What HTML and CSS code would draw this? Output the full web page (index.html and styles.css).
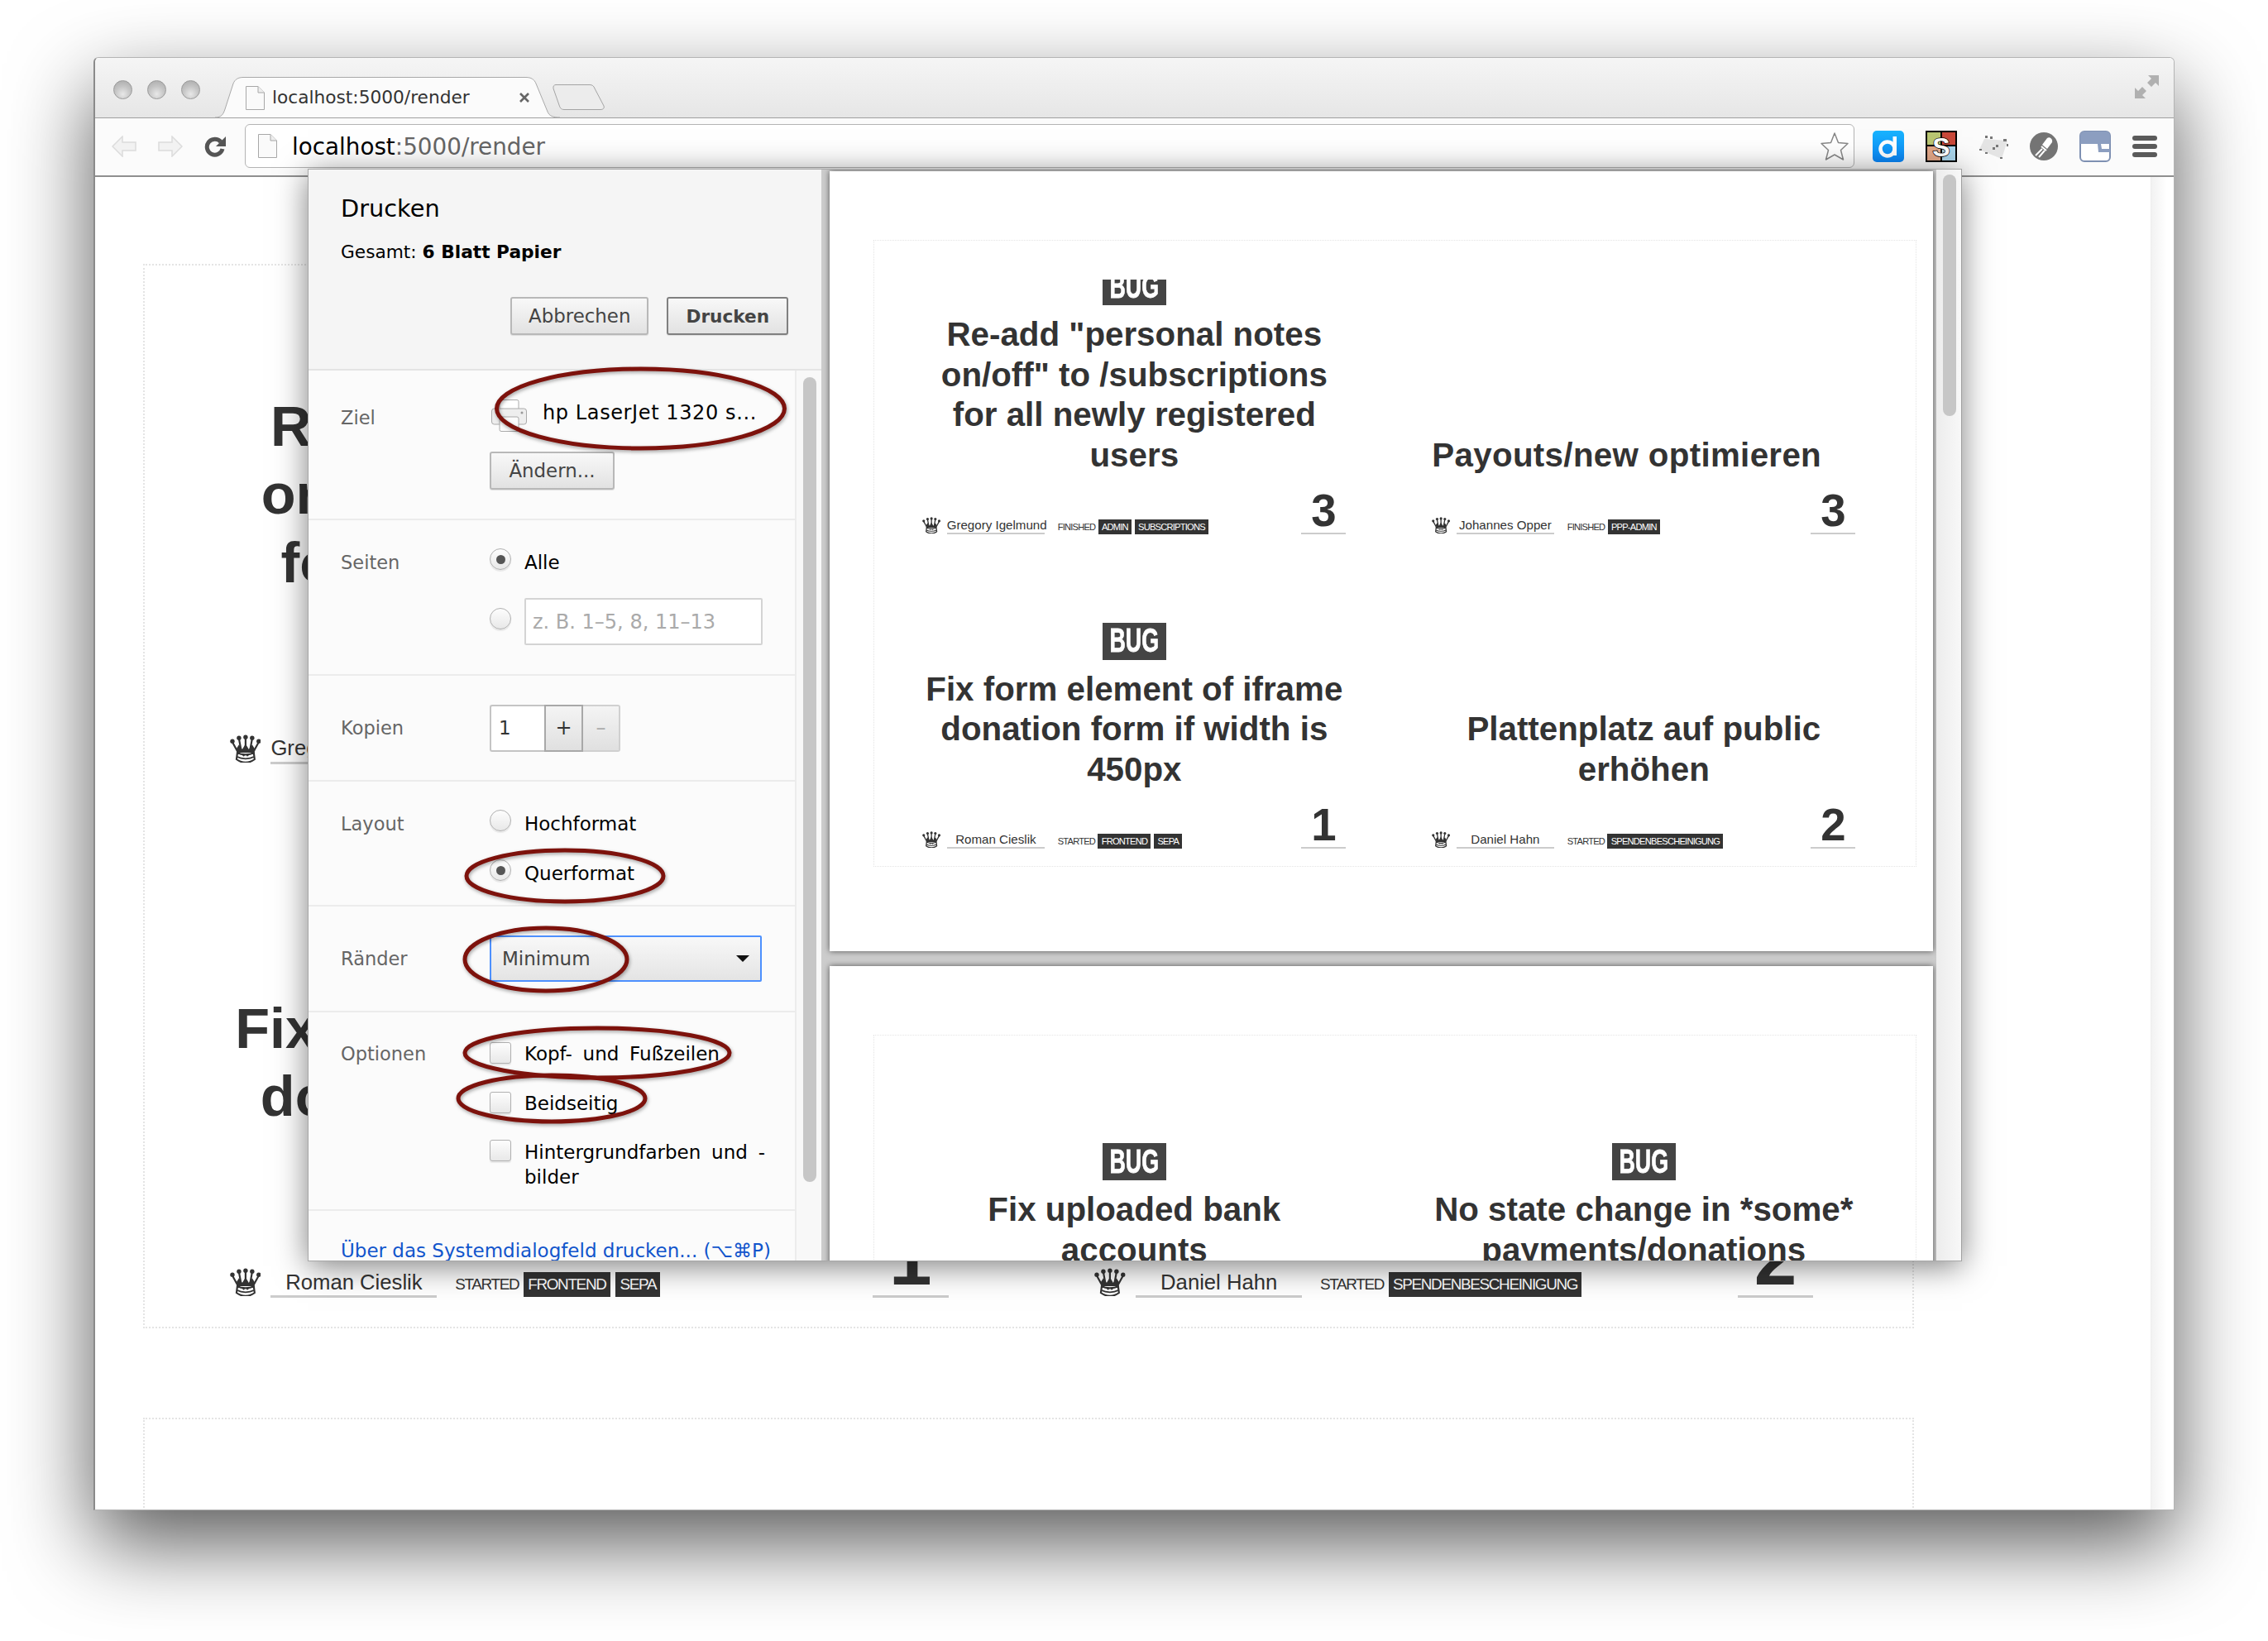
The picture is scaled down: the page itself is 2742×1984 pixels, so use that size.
FILE: index.html
```html
<!DOCTYPE html>
<html lang="de">
<head>
<meta charset="utf-8">
<title>localhost:5000/render</title>
<link rel="stylesheet" href="styles.css">
</head>
<body>
<svg class="defs" aria-hidden="true">
  <symbol id="page-icon" viewBox="0 0 23 29">
    <path d="M.5.5H15L22.5 8V28.500H.5Z" fill="#fafafa" stroke="#a8a8a8"/>
    <path d="M15 .5V8H22.500" fill="#eee" stroke="#a8a8a8"/>
  </symbol>
  <symbol id="crown" viewBox="0 0 38 34">
    <g fill="none" stroke="#333" stroke-width="2.2">
      <path d="M3 9 10 22M11 5 14 21M19 3V21M27 5 24 21M35 9 28 22"/>
      <path d="M9 22C14 25 24 25 29 22L30 30C24 35 14 35 8 30Z" fill="#fff"/>
      <path d="M9 27C14 30 24 30 29 27M15 24l2.500 2m5.500-2-2.500 2" stroke-width="1.800"/>
    </g>
    <path d="M8 17 11 12 15 18 19 11 23 18 27 12 30 17 28 22H10Z" fill="#333"/>
    <g fill="#333">
      <circle cx="3" cy="8" r="2.700"/><circle cx="11" cy="4" r="2.700"/><circle cx="19" cy="3" r="2.700"/>
      <circle cx="27" cy="4" r="2.700"/><circle cx="35" cy="8" r="2.700"/>
    </g>
  </symbol>
</svg>

<div class="window">
  <header class="titlebar">
    <div class="lights"><i class="light"></i><i class="light"></i><i class="light"></i></div>
    <div class="tab">
      <svg class="tab-shape" viewBox="0 0 417 50" width="417" height="50"><path d="M0 49C8 49 10 45 12 39L22 8C24 3 28 .5 34 .5H376C382 .5 386 3 388 8L402 42C404 47 408 49 417 49" fill="#fbfbfb" stroke="#a9a9a9"/></svg>
      <svg class="page-ico"><use href="#page-icon"/></svg>
      <span class="tab-title">localhost:5000/render</span>
      <svg class="tab-close" viewBox="0 0 14 14" width="14" height="14"><path d="M2 2 12 12M12 2 2 12" stroke="#666" stroke-width="2.600"/></svg>
    </div>
    <svg class="newtab" viewBox="0 0 63 31" width="63" height="31"><path d="M4 .5H45C48 .5 50 2 51 5L62 26C63 29 61 30.500 58 30.500H14C10 30.500 9 28 8 25L1 5C.5 2 2 .5 4 .5Z" fill="#ececec" stroke="#a4a4a4"/></svg>
    <svg class="fullscreen" viewBox="0 0 29 28" width="29" height="28"><path d="M16 0H29V13L25 9 20 14 15 9 20 4ZM0 15 4 19 9 14 14 19 9 24 13 28H0Z" fill="#b0b0b0"/></svg>
  </header>

  <nav class="toolbar">
    <svg class="nav-ico" viewBox="0 0 30 26" width="30" height="26"><path d="M13 1 1 13 13 25V18H29V8H13Z" fill="#f2f2f2" stroke="#dcdcdc" stroke-width="1.500"/></svg>
    <svg class="nav-ico" viewBox="0 0 30 26" width="30" height="26"><path d="M17 1 29 13 17 25V18H1V8H17Z" fill="#f2f2f2" stroke="#dcdcdc" stroke-width="1.500"/></svg>
    <svg class="nav-ico reload" viewBox="0 0 27 26" width="27" height="26"><path d="M20 7.500A9.500 9.500 0 1 0 22 16" fill="none" stroke="#555" stroke-width="5"/><path d="M26 1V13H14Z" fill="#555"/></svg>
    <div class="omnibox">
      <svg class="page-ico"><use href="#page-icon"/></svg>
      <span class="url"><b class="host">localhost</b>:5000/render</span>
      <svg class="star" viewBox="0 0 36 36" width="36" height="36"><path d="M18 2 22.500 13.500 34 14.500 25.500 22.500 28.500 34 18 28 7.500 34 10.500 22.500 2 14.500 13.500 13.500Z" fill="#fff" stroke="#888" stroke-width="1.500" stroke-linejoin="round"/></svg>
    </div>
    <div class="exts">
      <svg viewBox="0 0 38 38" width="38" height="38">
        <defs><linearGradient id="dblue" x1="0" y1="0" x2="0" y2="1"><stop offset="0" stop-color="#18b4ff"/><stop offset="1" stop-color="#0a84f5"/></linearGradient></defs>
        <rect width="38" height="38" rx="5" fill="url(#dblue)"/>
        <circle cx="18" cy="22" r="8.500" fill="none" stroke="#fff" stroke-width="4.500"/><rect x="24.500" y="7" width="4.500" height="23" fill="#fff"/>
      </svg>
      <svg viewBox="0 0 38 38" width="38" height="38">
        <rect width="38" height="38" fill="#000"/>
        <rect x="2" y="2" width="16" height="15" fill="#b9c672"/><rect x="20" y="2" width="16" height="15" fill="#c8493a"/>
        <rect x="2" y="19" width="16" height="17" fill="#e3a889"/><rect x="20" y="19" width="16" height="17" fill="#a9d4ea"/>
        <text class="ext-s" x="19" y="31" text-anchor="middle">S</text>
      </svg>
      <svg viewBox="0 0 37 30" width="37" height="30">
        <path d="M7 6 35 8 28 30 1 19Z" fill="#e4e4e4"/>
        <path d="M8 2h3v3H8zM14 3h3v3h-3zM30 6h4v3h-4zM21 13h3v3h-3zM17 16h3v3h-3zM1 18h3v2H1zM8 22h3v2H8zM26 28h3v2h-3zM34 12h2v3h-2z" fill="#777"/>
      </svg>
      <svg viewBox="0 0 34 34" width="34" height="34">
        <ellipse cx="17" cy="17" rx="17" ry="17" fill="#747474"/>
        <path d="M21 7C24 5 28 8 27 12L21 20 15 15Z" fill="#fff"/><path d="M14 17 20 22M15 20 7 28M18 22 11 30" stroke="#fff" stroke-width="2"/>
      </svg>
      <svg viewBox="0 0 38 38" width="38" height="38">
        <rect x="1" y="1" width="36" height="36" rx="5" fill="#fff" stroke="#7e90b2" stroke-width="2"/>
        <path d="M1 6a5 5 0 0 1 5-5H32a5 5 0 0 1 5 5V16H22L23 26H37V22H27L26 16H1Z" fill="#8c9ec0"/>
      </svg>
      <div class="menu-ico"><i></i><i></i><i></i></div>
    </div>
  </nav>

  <main class="content">
    <div class="doc">
      <section class="box box-screen">
        <article class="card">
          <span class="bug"><span>BUG</span></span>
          <h2 class="title">Re-add "personal notes<br>on/off" to /subscriptions<br>for all newly registered<br>users</h2>
          <div class="foot"><svg class="crown"><use href="#crown"/></svg><span class="name"><span>Gregory Igelmund</span></span><span class="status">FINISHED</span><span class="tag">ADMIN</span><span class="tag">SUBSCRIPTIONS</span><span class="points"><span>3</span></span></div>
        </article>
        <article class="card">
          <h2 class="title title-left">Payouts/new optimieren</h2>
          <div class="foot"><svg class="crown"><use href="#crown"/></svg><span class="name"><span>Johannes Opper</span></span><span class="status">FINISHED</span><span class="tag">PPP-ADMIN</span><span class="points"><span>3</span></span></div>
        </article>
        <article class="card">
          <span class="bug"><span>BUG</span></span>
          <h2 class="title">Fix form element of iframe<br>donation form if width is<br>450px</h2>
          <div class="foot"><svg class="crown"><use href="#crown"/></svg><span class="name"><span>Roman Cieslik</span></span><span class="status">STARTED</span><span class="tag">FRONTEND</span><span class="tag">SEPA</span><span class="points"><span>1</span></span></div>
        </article>
        <article class="card">
          <h2 class="title">Plattenplatz auf public<br>erhöhen</h2>
          <div class="foot"><svg class="crown"><use href="#crown"/></svg><span class="name"><span>Daniel Hahn</span></span><span class="status">STARTED</span><span class="tag">SPENDENBESCHEINIGUNG</span><span class="points"><span>2</span></span></div>
        </article>
      </section>
      <section class="box box-screen box-next"></section>
    </div>
    <div class="doc-scroll"></div>
  </main>

  <div class="dialog">
    <aside class="side">
      <div class="side-head">
        <h1 class="side-title">Drucken</h1>
        <p class="total">Gesamt: <b>6 Blatt Papier</b></p>
        <div class="actions"><button class="btn">Abbrechen</button><button class="btn btn-main">Drucken</button></div>
      </div>
      <div class="side-body">
        <div class="rows">
          <div class="row row-ziel">
            <div class="label">Ziel</div>
            <div class="ctrl">
              <div class="dest">
                <svg viewBox="0 0 43 39" width="43" height="39"><rect x="10" y=".5" width="23" height="16" rx="2" fill="#fff" stroke="#aaa"/><rect x=".5" y="11" width="42" height="19" rx="3" fill="#eee" stroke="#aaa"/><rect x="10" y="21" width="23" height="17.500" rx="2" fill="#fbfbfb" stroke="#aaa"/><circle cx="37" cy="16" r="1.500" fill="#999"/></svg>
                <span>hp LaserJet 1320 s...</span>
              </div>
              <button class="btn btn-change">Ändern...</button>
            </div>
          </div>
          <div class="row row-seiten">
            <div class="label">Seiten</div>
            <div class="ctrl">
              <label class="opt"><i class="radio on"></i>Alle</label>
              <div class="opt opt-input"><i class="radio"></i><span class="pages-input">z. B. 1–5, 8, 11–13</span></div>
            </div>
          </div>
          <div class="row row-center row-kopien">
            <div class="label">Kopien</div>
            <div class="spin"><span class="spin-val">1</span><span class="spin-btn">+</span><span class="spin-btn off">–</span></div>
          </div>
          <div class="row row-layout">
            <div class="label">Layout</div>
            <div class="ctrl">
              <label class="opt"><i class="radio"></i>Hochformat</label>
              <label class="opt"><i class="radio on"></i>Querformat</label>
            </div>
          </div>
          <div class="row row-center row-rand">
            <div class="label">Ränder</div>
            <div class="select"><span>Minimum</span><i class="caret"></i></div>
          </div>
          <div class="row row-opts">
            <div class="label">Optionen</div>
            <div class="ctrl">
              <label class="opt"><i class="check"></i>Kopf- und Fußzeilen</label>
              <label class="opt"><i class="check"></i>Beidseitig</label>
              <label class="opt opt-wrap"><i class="check"></i><span>Hintergrundfarben und -<br>bilder</span></label>
            </div>
          </div>
          <a class="sys-link">Über das Systemdialogfeld drucken... (⌥⌘P)</a>
        </div>
        <div class="side-scroll"><i></i></div>
      </div>
    </aside>

    <div class="preview">
      <div class="sheet">
        <section class="box box-print">
          <article class="card">
            <span class="bug"><span>BUG</span></span>
            <h2 class="title">Re-add "personal notes<br>on/off" to /subscriptions<br>for all newly registered<br>users</h2>
            <div class="foot"><svg class="crown"><use href="#crown"/></svg><span class="name"><span>Gregory Igelmund</span></span><span class="status">FINISHED</span><span class="tag">ADMIN</span><span class="tag">SUBSCRIPTIONS</span><span class="points"><span>3</span></span></div>
          </article>
          <article class="card">
            <h2 class="title title-left">Payouts/new optimieren</h2>
            <div class="foot"><svg class="crown"><use href="#crown"/></svg><span class="name"><span>Johannes Opper</span></span><span class="status">FINISHED</span><span class="tag">PPP-ADMIN</span><span class="points"><span>3</span></span></div>
          </article>
          <article class="card">
            <span class="bug"><span>BUG</span></span>
            <h2 class="title">Fix form element of iframe<br>donation form if width is<br>450px</h2>
            <div class="foot"><svg class="crown"><use href="#crown"/></svg><span class="name"><span>Roman Cieslik</span></span><span class="status">STARTED</span><span class="tag">FRONTEND</span><span class="tag">SEPA</span><span class="points"><span>1</span></span></div>
          </article>
          <article class="card">
            <h2 class="title">Plattenplatz auf public<br>erhöhen</h2>
            <div class="foot"><svg class="crown"><use href="#crown"/></svg><span class="name"><span>Daniel Hahn</span></span><span class="status">STARTED</span><span class="tag">SPENDENBESCHEINIGUNG</span><span class="points"><span>2</span></span></div>
          </article>
        </section>
      </div>
      <div class="sheet">
        <section class="box box-print">
          <article class="card">
            <span class="bug"><span>BUG</span></span>
            <h2 class="title">Fix uploaded bank<br>accounts</h2>
            <div class="foot"></div>
          </article>
          <article class="card">
            <span class="bug"><span>BUG</span></span>
            <h2 class="title">No state change in *some*<br>payments/donations</h2>
            <div class="foot"></div>
          </article>
        </section>
      </div>
      <div class="preview-scroll"><i></i></div>
    </div>

    <svg class="marks" viewBox="372 204 1000 1320" width="1000" height="1320" aria-hidden="true">
      <ellipse cx="773.500" cy="493" rx="174" ry="48"/>
      <ellipse cx="682" cy="1058" rx="119" ry="31"/>
      <ellipse cx="659" cy="1159" rx="98" ry="38"/>
      <ellipse cx="721" cy="1272" rx="160" ry="30"/>
      <ellipse cx="666" cy="1327" rx="113" ry="28"/>
    </svg>
  </div>
</div>
</body>
</html>
```
FILE: styles.css
```css
* { box-sizing: border-box; }
html, body { margin: 0; padding: 0; background: #fff; }
body { width: 2742px; height: 1984px; overflow: hidden; font-family: "DejaVu Sans", sans-serif; padding: 69px 0 0 113px; }
.defs { position: absolute; width: 0; height: 0; }
h1, h2, p { margin: 0; font-weight: normal; }
i { display: block; font-style: normal; }
svg { display: block; flex: none; }

/* browser window */
.window { position: relative; width: 2516px; height: 1757px; display: flex; flex-direction: column; border: 1px solid #b4b4b4; border-left: 2px solid #8a8a8a; border-radius: 6px 6px 0 0; box-shadow: 0 40px 100px rgba(0,0,0,.65); background: #fff; }
.titlebar { height: 73px; flex: none; display: flex; align-items: flex-end; padding-left: 22px; background: linear-gradient(#f5f5f5, #e6e6e6); border-bottom: 1px solid #a0a0a0; border-radius: 6px 6px 0 0; }
.lights { display: flex; gap: 18px; align-self: flex-start; margin-top: 27px; }
.light { width: 23px; height: 23px; border-radius: 50%; border: 1px solid #9a9a9a; background: radial-gradient(circle at 50% 75%, #e8e8e8 0, #c4c4c4 50%, #a8a8a8 100%); }
.tab { position: relative; width: 417px; height: 50px; margin: 0 0 -1px 18px; display: flex; align-items: center; padding-left: 37px; font-size: 21.700px; color: #333; }
.tab-shape { position: absolute; inset: 0; }
.tab .page-ico, .tab-title, .tab-close { position: relative; }
.page-ico { width: 23px; height: 29px; }
.tab-title { margin-left: 9px; white-space: nowrap; margin-top: -1px; }
.tab-close { margin-left: 59px; }
.newtab { margin: 0 0 9px -9px; }
.fullscreen { margin: 0 18px 23px auto; }

/* toolbar */
.toolbar { height: 71px; flex: none; display: flex; align-items: center; padding: 0 0 2px 20px; background: #fbfbfb; border-bottom: 2px solid #8f8f8f; }
.nav-ico { margin-right: 26px; }
.nav-ico.reload { margin-right: 22px; }
.omnibox { width: 1946px; height: 53px; display: flex; align-items: center; padding: 0 5px 0 15px; background: #fff; border: 1px solid #b4b4b4; border-radius: 6px; }
.url { margin: 2px 0 0 18px; font-size: 27.800px; color: #666; white-space: nowrap; }
.host { font-weight: normal; color: #000; }
.star { margin-left: auto; }
.exts { width: 344px; margin-left: 22px; display: flex; align-items: center; justify-content: space-between; }
.ext-s { font: bold 32px "Liberation Sans", sans-serif; fill: #fff; stroke: #000; stroke-width: 1.500px; paint-order: stroke; }
.menu-ico { width: 30px; display: flex; flex-direction: column; gap: 4px; }
.menu-ico i { height: 6px; border-radius: 3px; background: #5a5a5a; }

/* page behind the dialog */
.content { flex: 1; min-height: 0; display: flex; overflow: hidden; background: #fff; }
.doc { flex: 1; min-width: 0; padding: 105px 0 0 58px; }
.doc-scroll { width: 28px; background: linear-gradient(90deg, #f2f2f2, #fff 70%); border-left: 1px solid #eee; }

/* printed issue cards, sized in em so both scales share the rules */
.box { display: grid; grid-template-columns: 14.667em 14.667em; grid-auto-rows: 7.881em; row-gap: 1.167em; padding: 1.119em 0 0 .15em; border: .03em dotted #e4e4e4; font-family: "Liberation Sans", Arial, sans-serif; color: #333; }
.box-screen { font-size: 71.300px; width: 2141px; height: 1287px; padding-left: .2em; }
.box-next { margin-top: 108px; height: 400px; border-bottom: none; }
.box-print { font-size: 42px; width: 1261px; height: 758px; }
.card { min-width: 0; display: flex; flex-direction: column; justify-content: flex-end; align-items: center; overflow: hidden; padding: 0 1.238em .52em; text-align: center; }
.bug { flex: none; width: 1.833em; height: 1.071em; display: flex; align-items: center; justify-content: center; margin-bottom: .26em; background: #444; color: #fff; }
.bug span { font: bold .8em "Liberation Sans Narrow", "Liberation Sans", sans-serif; transform: scale(.8, 1.2); -webkit-text-stroke: .02em #fff; }
.title { flex: none; font-size: .96em; line-height: 1.203; font-weight: bold; white-space: nowrap; }
.title-left { align-self: flex-start; letter-spacing: .008em; }
.foot { flex: none; align-self: stretch; height: 1.14em; margin-top: .6em; display: flex; align-items: flex-end; white-space: nowrap; }
.box-screen .foot { margin-top: .56em; }
.crown { width: .53em; height: .48em; margin: 0 .17em .05em 0; }
.name { flex: none; width: 2.82em; line-height: .46em; border-bottom: .05em solid #ccc; margin-bottom: .02em; text-align: center; }
.name span { font-size: .36em; }
.status, .tag { flex: none; font-size: .265em; line-height: 1.62; letter-spacing: -.07em; margin-bottom: .12em; }
.status { margin-left: 1.4em; }
.box-screen .status { margin-left: 1.15em; }
.tag { margin-left: .34em; padding: 0 .28em; background: #333; color: #fff; }
.box-print .tag { padding: 0 .38em; }
.status + .tag { margin-left: .3em; }
.points { flex: none; margin-left: auto; width: 1.286em; border-bottom: .05em solid #ccc; margin-bottom: .02em; text-align: center; font-weight: bold; }
.points span { display: block; font-size: 1.3em; line-height: .85; padding-bottom: .06em; }

/* print dialog */
.dialog { position: absolute; left: 257px; top: 134px; width: 2000px; height: 1321px; display: flex; border: 1px solid #a8a8a8; border-right-color: #a0a0a0; box-shadow: 0 6px 36px rgba(0,0,0,.5); background: #f5f5f5; }
.side { width: 620px; flex: none; display: flex; flex-direction: column; font-size: 23px; color: #000; }
.side-head { height: 243px; flex: none; padding: 30px 40px 0 39px; border-bottom: 2px solid #e4e4e4; background: #f5f5f5; }
.side-title { font-size: 28.800px; line-height: 34px; }
.total { margin-top: 21px; font-size: 21.700px; line-height: 30px; }
.actions { display: flex; justify-content: flex-end; gap: 22px; margin-top: 39px; }
.btn { height: 46px; padding: 0 20px; font: 22.900px "DejaVu Sans", sans-serif; color: #444; border: 2px solid #b8b8b8; border-radius: 3px; background: linear-gradient(#f8f8f8, #e2e2e2); box-shadow: 0 1px 1px rgba(0,0,0,.1); }
.btn-main { font-weight: bold; font-size: 21.600px; border-color: #808080; padding: 0 21px; }
.side-body { flex: 1; min-height: 0; display: flex; overflow: hidden; }
.rows { width: 590px; flex: none; background: #fbfbfb; border-right: 2px solid #ececec; }
.row { display: grid; grid-template-columns: 179px 1fr; align-items: start; padding: 34px 27px 0 40px; border-bottom: 2px solid #ececec; }
.row-center { align-items: center; padding-top: 0; }
.row-ziel { height: 181px; }
.row-seiten { height: 188px; }
.row-kopien { height: 128px; }
.row-layout { height: 151px; }
.row-rand { height: 128px; }
.row-opts { height: 240px; padding-top: 33px; }
.label { color: #666; line-height: 34px; font-size: 22.500px; margin-left: -1px; }
.row-ziel .label { margin-top: 6px; }
.ctrl { display: flex; flex-direction: column; gap: 26px; }
.row-seiten .ctrl { gap: 25px; }
.row-ziel .ctrl { gap: 30px; align-items: flex-start; }
.dest { display: flex; align-items: center; gap: 19px; height: 34px; margin-left: 2px; font-size: 24px; letter-spacing: .6px; white-space: nowrap; }
.dest svg { margin-top: 6px; }
.btn-change { width: 151px; padding: 0; }
.opt { display: flex; align-items: center; gap: 16px; height: 34px; white-space: nowrap; word-spacing: 5.500px; }
.opt-input { height: 59px; }
.opt-wrap { align-items: flex-start; height: auto; line-height: 30px; margin-top: 1px; }
.opt-wrap span { display: block; }
.radio, .check { flex: none; width: 26px; height: 26px; margin-top: -8px; border: 1px solid #b0b0b0; background: linear-gradient(#fdfdfd, #e8e8e8); box-shadow: 0 2px 1px rgba(0,0,0,.08); }
.radio { border-radius: 50%; display: flex; align-items: center; justify-content: center; }
.radio.on::after { content: ""; width: 11px; height: 11px; border-radius: 50%; background: #555; }
.check { border-radius: 3px; margin-top: -3px; }
.opt-wrap .check { margin-top: 0; }
.pages-input { width: 288px; height: 57px; display: flex; align-items: center; padding-left: 8px; font-size: 24px; word-spacing: 0; color: #aaa; background: #fff; border: 2px solid #d4d4d4; border-radius: 2px; }
.opt-input .radio { margin-top: -8px; }
.spin { display: flex; height: 57px; width: 158px; }
.spin-val { width: 66px; line-height: 53px; padding-left: 9px; background: #fff; border: 2px solid #c4c4c4; border-right: none; border-radius: 3px 0 0 3px; color: #333; }
.spin-btn { flex: 1; display: flex; align-items: center; justify-content: center; background: linear-gradient(#f4f4f4, #e0e0e0); border: 2px solid #a8a8a8; color: #333; font-size: 24px; }
.spin-btn.off { color: #aaa; border-color: #d0d0d0; border-left: none; border-radius: 0 3px 3px 0; }
.select { width: 329px; height: 56px; display: flex; align-items: center; justify-content: space-between; padding: 0 13px 0 13px; color: #444; background: linear-gradient(#f8f8f8, #e4e4e4); border: 2px solid #4d90fe; border-radius: 2px; }
.caret { width: 0; height: 0; border: 8px solid transparent; border-top: 8px solid #111; border-bottom: none; }
.sys-link { display: block; padding: 33px 0 0 39px; font-size: 23px; line-height: 30px; color: #1155cc; white-space: nowrap; }
.side-scroll { flex: 1; padding: 8px 6px 0 8px; background: #f8f8f8; }
.side-scroll i { height: 973px; width: 16px; border-radius: 8px; background: #c6c6c6; }

.preview { position: relative; flex: 1; min-width: 0; overflow: hidden; padding: 2px 0 0 10px; background: #ccc; }
.sheet { width: 1334px; height: 943px; margin-bottom: 18px; padding: 83px 0 0 53px; background: #fff; box-shadow: 0 0 7px rgba(0,0,0,.6); }
.preview-scroll { position: absolute; top: 0; right: 0; bottom: 0; width: 30px; padding: 6px 0 0 8px; background: linear-gradient(90deg, #ececec, #f8f8f8); }
.preview-scroll i { width: 16px; height: 292px; border-radius: 8px; background: #c6c6c6; }
.marks { position: absolute; left: 0; top: 0; pointer-events: none; filter: drop-shadow(1px 2px 2px rgba(0,0,0,.35)); }
.marks ellipse { fill: none; stroke: #7d120c; stroke-width: 5px; }
```
